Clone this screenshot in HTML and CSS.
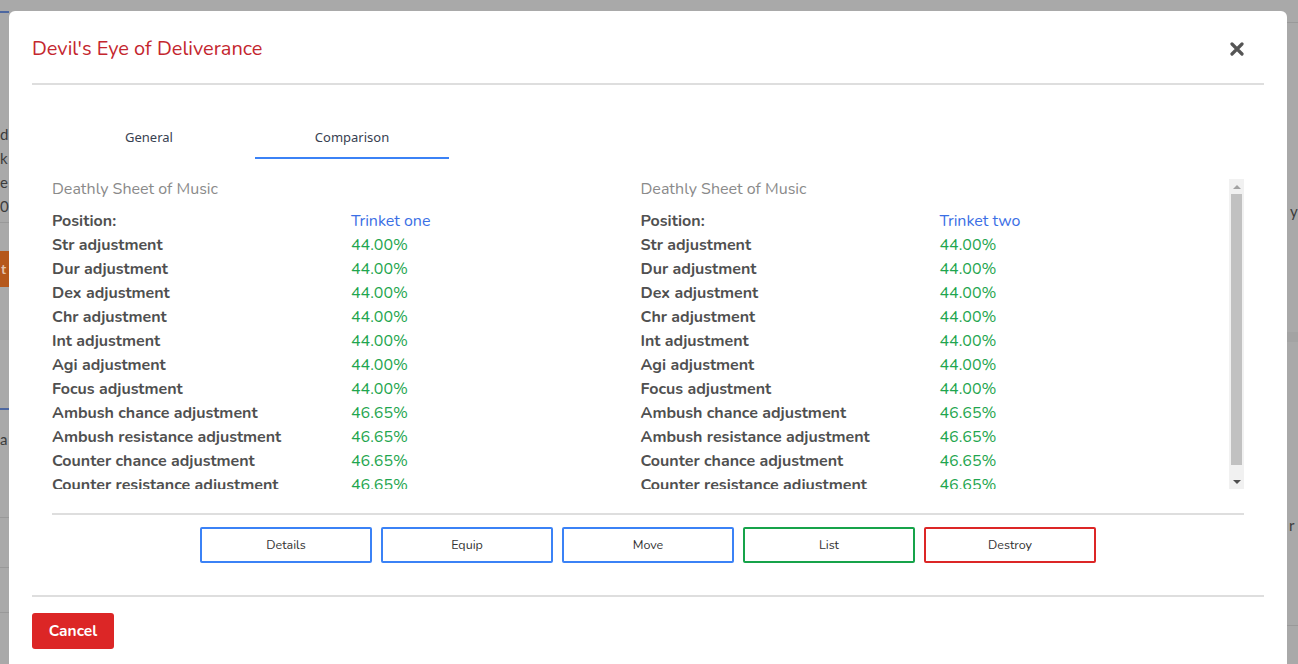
FILE: index.html
```html
<!DOCTYPE html>
<html lang="en">
<head>
<meta charset="utf-8">
<title>Devil's Eye of Deliverance</title>
<link rel="stylesheet" href="styles.css">
</head>
<body>
<div class="backdrop">
  <div class="bg-topline"></div>
  <div class="bg-text bg-left-text">d<br>k<br>e<br>0</div>
  <div class="bg-hline bg-l1"></div>
  <div class="bg-orange">t</div>
  <div class="bg-band bg-lband"></div>
  <div class="bg-blueline"></div>
  <div class="bg-text bg-left-a">a</div>
  <div class="bg-hline bg-l2"></div>
  <div class="bg-hline bg-l3"></div>
  <div class="bg-hline bg-l4"></div>
  <div class="bg-hline bg-r1"></div>
  <div class="bg-text bg-right-y">y</div>
  <div class="bg-band bg-rband"></div>
  <div class="bg-text bg-right-r">r</div>
  <div class="bg-hline bg-r2"></div>
</div>

<div class="modal">
  <div class="modal-header">
    <h2 class="modal-title">Devil's Eye of Deliverance</h2>
    <button class="close" aria-label="Close">
      <svg width="14" height="14" viewBox="0 0 14 14"><path d="M2 2 L12 12 M12 2 L2 12" stroke="#555" stroke-width="3.2" stroke-linecap="round" fill="none"/></svg>
    </button>
  </div>

  <div class="modal-body">
    <div class="tabs">
      <div class="tab">General</div>
      <div class="tab active">Comparison</div>
    </div>

    <div class="compare">
      <div class="compare-view">
        <div class="cols">
          <div class="col">
            <div class="item-name">Deathly Sheet of Music</div>
            <div class="stats">
              <div class="label">Position:</div><div class="val blue">Trinket one</div>
              <div class="label">Str adjustment</div><div class="val green">44.00%</div>
              <div class="label">Dur adjustment</div><div class="val green">44.00%</div>
              <div class="label">Dex adjustment</div><div class="val green">44.00%</div>
              <div class="label">Chr adjustment</div><div class="val green">44.00%</div>
              <div class="label">Int adjustment</div><div class="val green">44.00%</div>
              <div class="label">Agi adjustment</div><div class="val green">44.00%</div>
              <div class="label">Focus adjustment</div><div class="val green">44.00%</div>
              <div class="label">Ambush chance adjustment</div><div class="val green">46.65%</div>
              <div class="label">Ambush resistance adjustment</div><div class="val green">46.65%</div>
              <div class="label">Counter chance adjustment</div><div class="val green">46.65%</div>
              <div class="label">Counter resistance adjustment</div><div class="val green">46.65%</div>
            </div>
          </div>
          <div class="col">
            <div class="item-name">Deathly Sheet of Music</div>
            <div class="stats">
              <div class="label">Position:</div><div class="val blue">Trinket two</div>
              <div class="label">Str adjustment</div><div class="val green">44.00%</div>
              <div class="label">Dur adjustment</div><div class="val green">44.00%</div>
              <div class="label">Dex adjustment</div><div class="val green">44.00%</div>
              <div class="label">Chr adjustment</div><div class="val green">44.00%</div>
              <div class="label">Int adjustment</div><div class="val green">44.00%</div>
              <div class="label">Agi adjustment</div><div class="val green">44.00%</div>
              <div class="label">Focus adjustment</div><div class="val green">44.00%</div>
              <div class="label">Ambush chance adjustment</div><div class="val green">46.65%</div>
              <div class="label">Ambush resistance adjustment</div><div class="val green">46.65%</div>
              <div class="label">Counter chance adjustment</div><div class="val green">46.65%</div>
              <div class="label">Counter resistance adjustment</div><div class="val green">46.65%</div>
            </div>
          </div>
        </div>
      </div>
      <div class="scrollbar" aria-hidden="true">
        <div class="sb-btn">
          <svg width="8" height="4" viewBox="0 0 8 4"><polygon points="0,4 8,4 4,0" fill="#a3a3a3"/></svg>
        </div>
        <div class="sb-track"><div class="sb-thumb"></div></div>
        <div class="sb-btn">
          <svg width="8" height="4" viewBox="0 0 8 4"><polygon points="0,0 8,0 4,4" fill="#505050"/></svg>
        </div>
      </div>
    </div>

    <div class="sep"></div>

    <div class="actions">
      <button class="act act-blue">Details</button>
      <button class="act act-blue">Equip</button>
      <button class="act act-blue">Move</button>
      <button class="act act-green">List</button>
      <button class="act act-red">Destroy</button>
    </div>
  </div>

  <div class="modal-footer">
    <button class="cancel">Cancel</button>
  </div>
</div>
</body>
</html>
```

FILE: styles.css
```css
* { box-sizing: border-box; }

html, body {
  margin: 0;
  height: 664px;
  overflow: hidden;
}

body {
  background: #a9a9a9;
  font-family: "Nunito", "Lato", "Open Sans", sans-serif;
  padding-top: 11px;
  position: relative;
}

/* dimmed page behind the dialog */
.backdrop {
  position: absolute;
  inset: 0;
  z-index: 0;
}
.bg-topline { position: absolute; left: 0; top: 11px; width: 9px; height: 2px; background: #4d67a0; }
.bg-text { position: absolute; color: #3c3c3c; font-family: "Lato", sans-serif; font-size: 15px; }
.bg-left-text { left: 0; top: 122px; line-height: 24px; }
.bg-left-a { left: 0; top: 430px; }
.bg-right-y { left: 1290px; top: 202px; }
.bg-right-r { left: 1289px; top: 516px; }
.bg-hline { position: absolute; height: 1px; background: #999; }
.bg-l1 { left: 0; width: 9px; top: 222px; }
.bg-l2 { left: 0; width: 9px; top: 517px; }
.bg-l3 { left: 0; width: 9px; top: 567px; }
.bg-l4 { left: 0; width: 9px; top: 612px; }
.bg-r1 { left: 1287px; width: 11px; top: 22px; }
.bg-r2 { left: 1287px; width: 11px; top: 625px; }
.bg-orange {
  position: absolute; left: 0; top: 251px; width: 9px; height: 36px;
  background: #b5581c; color: #e3c2ac; font: bold 14px "Lato", sans-serif;
  line-height: 36px; padding-left: 1px;
}
.bg-band { position: absolute; height: 10px; background: #a3a3a3; }
.bg-lband { left: 0; width: 9px; top: 330px; }
.bg-rband { left: 1287px; width: 11px; top: 332px; }
.bg-blueline { position: absolute; left: 0; top: 408px; width: 9px; height: 2px; background: #4d67a0; }

/* dialog */
.modal {
  position: relative;
  z-index: 1;
  margin-left: 9px;
  width: 1278px;
  height: 680px;
  background: #fff;
  border-radius: 6px 6px 0 0;
}

.modal-header {
  margin: 0 23px;
  padding: 25px 20px 21px 0;
  border-bottom: 2px solid #dedede;
  display: flex;
  align-items: center;
  justify-content: space-between;
}
.modal-title {
  margin: 0;
  font-size: 20px;
  line-height: 26px;
  font-weight: 400;
  color: #c4262e;
}
.close {
  border: 0;
  background: none;
  padding: 0;
  width: 14px;
  height: 14px;
  display: flex;
  cursor: pointer;
}

.modal-body {
  padding: 30px 43px 0;
}

.tabs {
  display: flex;
  gap: 9px;
}
.tab {
  width: 194px;
  padding: 12px 0 10px;
  line-height: 20px;
  text-align: center;
  font-family: "Noto Sans", sans-serif;
  font-size: 13px;
  color: #374151;
  border-bottom: 2px solid transparent;
}
.tab.active {
  border-bottom-color: #3b82f6;
}

.compare {
  margin-top: 20px;
  height: 310px;
  display: flex;
}
.compare-view {
  flex: 1;
  overflow: hidden;
}

.scrollbar {
  width: 15px;
  background: #f1f1f1;
  display: flex;
  flex-direction: column;
}
.sb-btn {
  height: 15px;
  display: flex;
  align-items: center;
  justify-content: center;
}
.sb-btn svg { display: block; }
.sb-track {
  flex: 1;
  padding: 0 2px 9px;
  display: flex;
}
.sb-thumb {
  flex: 1;
  background: #c1c1c1;
}

.cols {
  display: grid;
  grid-template-columns: 1fr 1fr;
}
.item-name {
  font-size: 16px;
  line-height: 20px;
  color: #8a8a8a;
  margin-bottom: 10px;
}
.stats {
  display: grid;
  grid-template-columns: 299px 1fr;
  font-size: 16px;
  line-height: 24px;
}
.label {
  font-weight: 700;
  color: #505050;
}
.val.blue { color: #3b6fe5; }
.val.green { color: #1fa64f; }

.sep {
  margin-top: 24px;
  height: 2px;
  background: #dedede;
}

.actions {
  margin-top: 12px;
  display: flex;
  justify-content: center;
  gap: 9px;
}
.act {
  width: 172px;
  height: 36px;
  padding: 0 0 2px;
  background: #fff;
  border: 2px solid;
  border-radius: 2px;
  font-family: "Nunito", "Lato", sans-serif;
  font-size: 12.5px;
  color: #333;
}
.act-blue { border-color: #3b82f6; }
.act-green { border-color: #16a34a; }
.act-red { border-color: #dc2626; }

.modal-footer {
  margin: 32px 23px 0;
  padding-top: 16px;
  border-top: 2px solid #dedede;
}
.cancel {
  width: 82px;
  height: 36px;
  padding: 0 0 2px;
  border: 0;
  border-radius: 3px;
  background: #dc2626;
  color: #fff;
  font-family: "Nunito", "Lato", sans-serif;
  font-weight: 700;
  font-size: 15.5px;
}
```
